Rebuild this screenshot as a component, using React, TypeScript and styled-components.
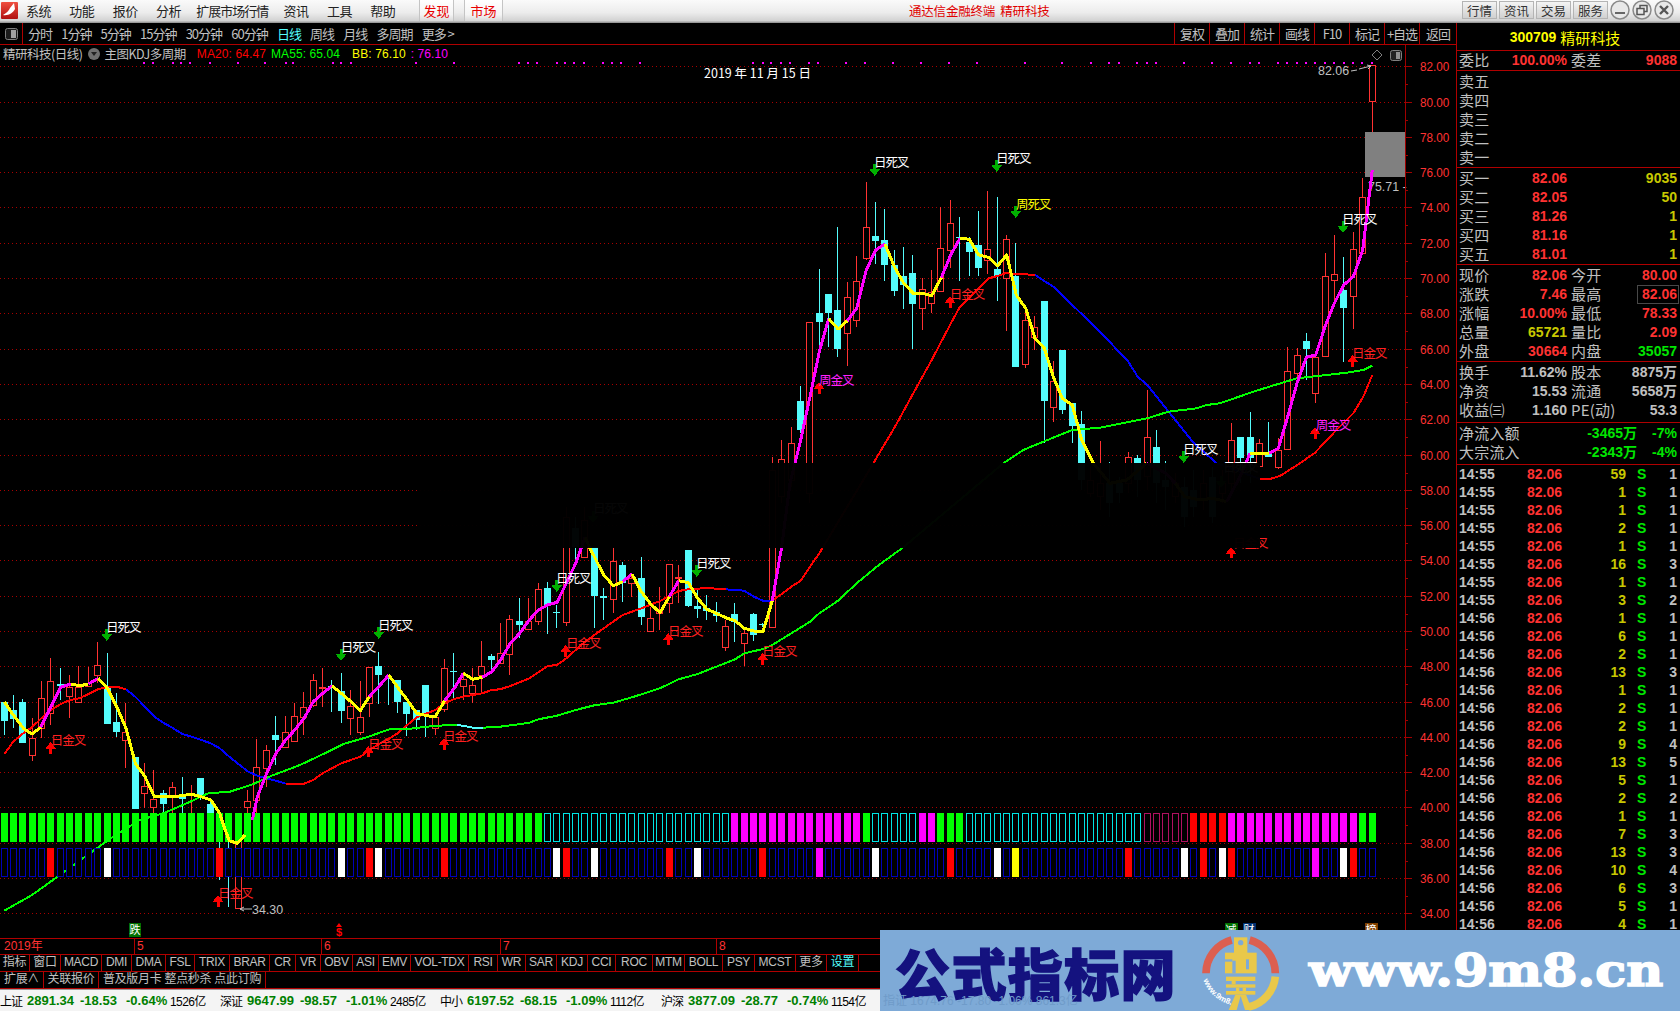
import React from "react";
import styled, { createGlobalStyle } from "styled-components";

const UI = `"Noto Sans CJK SC", "Liberation Sans", sans-serif`;
const NUM = `"Liberation Sans", "Noto Sans CJK SC", sans-serif`;
const LINE = "#b00000";
const RED = "#ff3232";
const GRAY = "#c0c0c0";

const Global = createGlobalStyle`
  html, body { margin: 0; padding: 0; background: #000; width: 1680px; height: 1011px; overflow: hidden; }
  * { box-sizing: border-box; }
`;

const Page = styled.div`
  position: relative; width: 1680px; height: 1011px; display: flex; flex-direction: column;
  background: #000; font-family: ${UI}; color: ${GRAY}; overflow: hidden;
`;

/* ---------- menu bar ---------- */
const MenuBar = styled.div`
  height: 23px; flex: none; display: flex; align-items: stretch; color: #222; font-size: 13px;
  background: linear-gradient(#fafafa, #ececec 55%, #d2d2d2 90%, #8a8a8a);
`;
const LogoBox = styled.svg`width: 18px; height: 20px; margin: 1px 7px 0 1px; flex: none;`;
const MenuItems = styled.div`display: flex; align-items: center; gap: 18.3px; width: 393px; padding-bottom: 2px; letter-spacing: -0.5px; white-space: nowrap;`;
const MenuItem = styled.span<{ $tight?: boolean }>`${p => (p.$tight ? "margin: 0 -3px; letter-spacing: -1px;" : "")}`;
const Discover = styled.span<{ $w: number }>`
  width: ${p => p.$w}px; margin-right: 10px; display: flex; align-items: center; justify-content: center;
  color: #e80000; background: linear-gradient(#fff, #f4f4f4 70%, #d8d8d8);
  border-left: 1px solid #c4c4c4; border-right: 1px solid #c4c4c4; margin-bottom: 2px;
`;
const CenterTitle = styled.span`
  position: absolute; left: 909px; top: 2px; font-size: 12.5px; letter-spacing: -0.2px; line-height: 18px; color: #e00000; white-space: pre;
`;
const WinGroup = styled.div`margin-left: auto; display: flex; align-items: center; gap: 2px; padding-right: 6px; padding-bottom: 3px;`;
const WinBtn = styled.span`
  width: 35px; height: 18px; display: flex; align-items: center; justify-content: center; font-size: 12.5px; color: #333;
  border: 1px solid #b4b4b4; background: linear-gradient(#f4f4f4, #d0d0d0);
`;
const RoundBtn = styled.svg`width: 20px; height: 20px; flex: none;`;

/* ---------- body ---------- */
const Body = styled.div`flex: 1; display: flex; min-height: 0;`;
const Main = styled.div`width: 1456px; flex: none; display: flex; flex-direction: column;`;

const Toolbar = styled.div`
  height: 22px; flex: none; display: flex; align-items: stretch; border-bottom: 1px solid ${LINE}; font-size: 13px; letter-spacing: -1px;
`;
const ToolIcon = styled.div`width: 23px; flex: none; display: flex; align-items: center; justify-content: center; border-right: 1px solid ${LINE};`;
const Periods = styled.div`display: flex; align-items: center; gap: 9.2px; padding-left: 5px; white-space: nowrap;`;
const Period = styled.span<{ $on?: boolean }>`color: ${p => (p.$on ? "#54fcfc" : GRAY)};`;
const ToolRight = styled.div`margin-left: auto; display: flex;`;
const ToolBtn = styled.span<{ $w?: number }>`
  width: ${p => p.$w ?? 35}px; display: flex; align-items: center; justify-content: center; border-left: 1px solid ${LINE}; white-space: nowrap;
`;

const ChartWrap = styled.div`position: relative; flex: 1; min-height: 0;`;
const ChartSvg = styled.svg`display: block; width: 1456px; height: 892px;`;
const InfoLine = styled.div`
  position: absolute; left: 3px; top: 0; display: flex; align-items: center; height: 17px; font-size: 12.5px; white-space: nowrap; letter-spacing: -0.5px;
`;
const InfoIcon = styled.span`
  width: 12px; height: 12px; border-radius: 50%; background: #707070; margin: 0 4px 0 6px; display: inline-flex; align-items: center; justify-content: center;
  &::after { content: ""; border: 3px solid transparent; border-top: 4px solid #222; margin-top: 4px; }
`;
const InfoVal = styled.span<{ $c: string; $ml: number }>`
  color: ${p => p.$c}; margin-left: ${p => p.$ml}px; font-family: ${NUM}; font-size: 12px; letter-spacing: 0.1px;
`;

const DateRow = styled.div`
  height: 17px; flex: none; display: flex; border-top: 1px solid ${LINE}; border-bottom: 1px solid ${LINE};
  color: ${RED}; font-size: 12px; font-family: ${NUM}; line-height: 15px;
`;
const DateCell = styled.div<{ $w: number; $first?: boolean }>`
  width: ${p => p.$w}px; padding-left: ${p => (p.$first ? 4 : 2)}px; ${p => (p.$first ? "" : `border-left: 1px solid ${LINE};`)}
`;
const TabRow = styled.div`
  height: 17px; flex: none; display: flex; border-bottom: 1px solid ${LINE}; font-size: 12px; line-height: 15px; font-family: ${NUM}; letter-spacing: -0.3px;
`;
const Tab = styled.span<{ $w: number; $on?: boolean }>`
  width: ${p => p.$w}px; flex: none; text-align: center; border-right: 1px solid ${LINE}; white-space: nowrap; color: ${p => (p.$on ? "#54fcfc" : GRAY)};
`;

/* ---------- side panel ---------- */
const Side = styled.div`flex: 1; min-width: 0; border-left: 1px solid ${LINE}; overflow: hidden;`;
const Title = styled.div`
  height: 28px; display: flex; align-items: center; justify-content: center; gap: 4px; border-bottom: 1px solid ${LINE}; padding: 1px 7px 0 0;
  color: #ffff00; font-size: 15px;
`;
const Code = styled.b`font-family: ${NUM}; font-size: 14px;`;
const Section = styled.div<{ $pad?: number; $h?: number }>`
  padding: ${p => p.$pad ?? 1}px 3px 0 2px; border-bottom: 1px solid ${LINE};
  ${p => (p.$h ? `height: ${p.$h}px;` : "")}
`;
const QuoteRow = styled.div`
  height: 19px; display: grid; grid-template-columns: 36px 72px 36px 1fr; column-gap: 0; align-items: center;
  & > :nth-child(3) { margin-left: 4px; }
`;
const WideRow = styled.div`height: 19px; display: grid; grid-template-columns: 1fr 90px 40px; align-items: center;`;
const Lab = styled.span`font-size: 15px; line-height: 19px; margin-top: -3px; color: ${GRAY}; white-space: nowrap; letter-spacing: 0.2px;`;
const toneOf: Record<string, string> = { r: RED, y: "#c8c800", g: "#00e600", w: GRAY };
const Val = styled.span<{ $t: string; $box?: boolean }>`
  text-align: right; font-family: ${NUM}; font-weight: 700; font-size: 14px; line-height: 17px; margin-top: -1px; white-space: nowrap; color: ${p => toneOf[p.$t]};
  ${p => (p.$box ? "border: 1px solid #484848; margin-right: -2px; padding-right: 1px; margin-left: 34px;" : "")}
`;
const TickRow = styled.div`
  height: 18px; padding: 0 3px 0 2px; display: grid; grid-template-columns: 68px 36px 63px 21px 1fr; align-items: center;
  font-family: ${NUM}; font-weight: 700; font-size: 14px; line-height: 18px;
`;
const TickCell = styled.span<{ $t: string; $r?: boolean; $pl?: number }>`
  color: ${p => toneOf[p.$t]}; text-align: ${p => (p.$r ? "right" : "left")}; padding-left: ${p => p.$pl ?? 0}px;
`;

/* ---------- status bar ---------- */
const Status = styled.div`
  height: 22px; flex: none; display: flex; background: #f4f4f4; border-top: 1px solid #9a9a9a; color: #000; font-size: 13px; align-items: center; padding-bottom: 1px;
`;
const StatGroup = styled.div<{ $w: number }>`
  width: ${p => p.$w}px; flex: none; display: grid; grid-template-columns: 27px 53px 46px 44px 1fr; align-items: center; white-space: nowrap;
`;
const StatName = styled.span`font-size: 12px; letter-spacing: -1px;`;
const StatNum = styled.b`font-family: ${NUM}; font-size: 13px; color: #008000;`;
const StatVol = styled.span`font-family: ${NUM}; font-size: 12px; letter-spacing: -0.6px;`;

/* ---------- watermark overlay ---------- */
const Watermark = styled.div`
  position: absolute; left: 880px; top: 930px; width: 800px; height: 81px; background: #7eaad7; display: flex; align-items: center; overflow: hidden;
`;
const MarkName = styled.div`
  width: 310px; flex: none; padding-left: 15px; font-size: 55px; line-height: 76px; font-weight: 900; color: #14127f; white-space: nowrap; letter-spacing: 1.4px;
  -webkit-text-stroke: 1.4px #14127f;
`;
const MarkLogo = styled.svg`width: 110px; height: 86px; flex: none; margin-top: 5px;`;
const MarkUrl = styled.div`
  margin-left: 9px; font-family: "DejaVu Serif", "Liberation Serif", serif; font-weight: 700; font-size: 45px; line-height: 60px; color: #fff;
  white-space: nowrap; transform: scaleX(1.13); transform-origin: left center; -webkit-text-stroke: 1.6px #fff; letter-spacing: 0;
`;
const Ghost = styled.span`
  position: absolute; left: 3px; bottom: 3px; font-size: 12px; color: #6f9bc9; white-space: nowrap; font-family: ${NUM};
`;

/* ---------- data ---------- */
type CandleRow = [number, "r" | "c", number, number, number, number];
const batch = (off: number, rows: CandleRow[]) =>
  rows.map(([i, k, bt, bb, wt, wb]) => ({ i, k, bt: off + bt / 3, bb: off + bb / 3, wt: off + wt / 3, wb: off + wb / 3 }));

const candles = [
  ...batch(600, [
    [0,"c",305,362,305,405],[1,"c",330,357,285,385],[2,"c",306,430,296,430],[3,"r",415,466,355,482],[4,"r",295,385,242,415],
    [5,"r",244,340,175,375],[6,"c",252,256,205,300],[7,"r",260,287,225,355],[8,"r",260,305,198,305],[9,"r",250,258,200,262],
    [10,"r",196,227,126,250],[11,"c",265,371,160,371],[12,"c",366,396,280,410],[13,"r",395,418,310,505],[14,"c",472,627,472,627],
    [15,"r",557,578,490,625],[16,"r",596,620,510,640],[17,"c",580,612,570,640],[18,"r",562,585,547,640],[19,"c",590,597,532,640],
    [20,"r",580,585,555,640],[21,"c",534,590,534,600],[22,"c",613,640,600,640],[23,"c",640,700,640,840],[24,"c",700,710,700,920],
    [25,"r",700,925,700,925],[26,"r",602,620,570,640],[27,"r",502,600,418,640],[28,"r",451,505,435,560],[29,"c",405,420,348,495],
    [30,"r",395,440,348,445],[31,"r",347,421,308,421],[32,"r",322,352,275,405],[33,"r",241,316,222,320],[34,"r",262,265,205,320],
    [35,"c",258,262,240,335],[36,"c",274,332,218,370],[37,"r",317,352,270,405],[38,"r",352,398,243,405],[39,"r",202,310,202,350],
    [40,"c",198,224,155,312],[41,"c",228,232,225,315],[42,"c",240,305,240,340],[43,"c",306,342,306,408],[44,"c",330,360,330,390],
    [45,"c",255,340,255,410],[46,"r",352,385,340,405],[47,"r",205,328,178,335],[48,"c",212,216,160,300],[49,"r",238,260,215,300],
    [50,"r",256,280,205,310],[51,"r",198,225,124,280],[52,"c",168,180,162,220],
  ]),
  ...batch(450, [
    [53,"r",610,640,520,640],[54,"r",508,612,495,675],[55,"c",513,525,445,565],[56,"r",514,538,445,538],[57,"r",418,515,400,525],
    [58,"c",414,466,395,552],[59,"c",485,489,465,535],[60,"r",200,515,170,528],[61,"c",235,290,200,345],[62,"r",210,320,170,320],
    [63,"c",292,438,292,535],[64,"c",438,442,415,510],[65,"r",333,446,292,490],[66,"c",346,398,335,455],[67,"r",385,400,370,440],
    [68,"c",384,500,322,525],[69,"r",505,545,470,545],[70,"r",480,490,410,540],[71,"r",343,460,342,488],[72,"r",381,385,345,460],
    [73,"c",300,467,300,470],[74,"c",468,477,420,505],[75,"c",475,482,435,510],[76,"c",485,497,457,515],[77,"r",527,590,510,602],
    [78,"c",492,515,460,575],[79,"r",550,580,540,648],[80,"c",492,555,490,572],[81,"c",521,525,520,530],[82,"r",60,530,20,530],
  ]),
  ...batch(130, [
    [83,"r",988,1100,930,1120],[84,"r",938,1050,892,1070],[85,"c",813,900,768,910],[86,"r",577,1090,577,1120],[87,"c",549,576,418,660],
    [88,"c",492,549,492,650],[89,"c",540,657,292,680],[90,"r",502,610,457,708],[91,"r",454,572,378,590],[92,"r",292,384,155,390],
    [93,"c",318,333,216,402],[94,"c",330,405,237,452],[95,"c",405,484,360,497],[96,"c",438,465,350,537],[97,"c",429,522,375,657],
    [98,"r",478,536,445,600],[99,"r",485,518,420,548],[100,"r",355,485,232,485],[101,"r",280,362,210,415],[102,"c",320,324,262,452],
    [103,"c",335,366,320,438],[104,"c",345,414,243,438],[105,"r",358,392,183,432],[106,"c",417,437,202,512],[107,"r",328,445,316,603],
    [108,"c",438,711,340,711],[109,"r",570,703,530,715],[110,"r",590,620,558,660],[111,"c",513,813,513,940],[112,"r",753,832,692,875],
    [113,"c",660,840,660,852],[114,"c",820,888,820,940],
  ]),
  ...batch(50, [
    [115,"c",1122,1290,1083,1320],[116,"r",1290,1330,1250,1340],[117,"r",1300,1340,1173,1380],[118,"c",1300,1360,1235,1400],[119,"c",1300,1330,1280,1360],
    [120,"r",1222,1300,1205,1330],[121,"c",1225,1290,1215,1340],[122,"r",1162,1280,1020,1320],[123,"c",1192,1300,1140,1360],[124,"c",1290,1310,1232,1380],
    [125,"r",1300,1340,1270,1360],[126,"c",1310,1400,1280,1430],[127,"c",1320,1370,1260,1400],[128,"r",1300,1350,1260,1380],[129,"c",1280,1400,1250,1420],
    [130,"r",1300,1330,1260,1360],[131,"r",1170,1300,1120,1320],[132,"c",1162,1225,1162,1300],[133,"c",1162,1225,1087,1300],[134,"r",1180,1250,1168,1250],
    [135,"c",1205,1222,1115,1222],[136,"r",1200,1252,1165,1258],[137,"r",962,1195,890,1195],[138,"r",914,968,895,1000],[139,"c",874,898,850,990],
    [140,"r",922,1030,922,1058],[141,"r",677,918,610,918],[142,"r",671,688,555,770],[143,"c",720,773,622,937],[144,"r",598,740,547,838],
    [145,"r",442,610,385,610],[146,"r",46,154,46,245],
  ]),
];

const conv = (ox: number, oy: number, pts: number[][]) => pts.map(([x, y]) => `${(ox + x / 3).toFixed(1)},${(oy + y / 3).toFixed(1)}`);
const Z6 = (p: number[][]) => conv(0, 600, p);
const Z7 = (p: number[][]) => conv(500, 450, p);
const Z8 = (p: number[][]) => conv(760, 130, p);
const Z9 = (p: number[][]) => conv(1000, 50, p);

const Y = "#ffff00", M = "#ff00ff", R = "#ff0000", B = "#0000ff", G = "#00ff00", Cy = "#54fcfc";

const kdj: [string, string[]][] = [
  [Y, Z6([[13,305],[40,345],[70,385],[96,402],[122,382]])],
  [M, Z6([[122,382],[150,325],[182,262],[212,252]])],
  [Y, Z6([[212,252],[240,257],[265,252]])],
  [M, Z6([[265,252],[295,235]])],
  [Y, Z6([[295,235],[322,265],[350,320],[378,385],[406,490],[435,530],[463,590],[490,590],[520,590],[575,583],[604,590],[632,600],[659,640],[672,680],[688,722],[712,730],[735,705]])],
  [M, Z6([[757,660],[772,590],[800,520],[828,460],[857,420],[884,390],[912,355],[940,305],[968,280],[996,258]])],
  [Y, Z6([[996,258],[1024,280],[1053,305],[1081,332],[1108,290]])],
  [M, Z6([[1108,290],[1138,258],[1166,225]])],
  [Y, Z6([[1166,225],[1193,262],[1222,300],[1250,340],[1280,347],[1306,350],[1334,302]])],
  [M, Z6([[1334,302],[1363,265],[1390,220]])],
  [Y, Z6([[1390,220],[1418,238],[1447,232]])],
  [M, [...Z6([[1447,232],[1475,215],[1500,183]]), ...Z7([[31,580],[59,550],[88,510],[115,480],[143,465],[171,457],[199,400],[227,340],[245,290],[255,262]])]],
  [Y, Z7([[255,262],[270,295],[311,375],[340,407],[368,395]])],
  [M, Z7([[368,395],[396,372]])],
  [Y, Z7([[396,372],[424,425],[452,462],[480,488],[508,440]])],
  [M, Z7([[508,440],[536,392]])],
  [Y, Z7([[536,392],[565,398],[593,445],[621,478],[649,490],[677,503],[705,512],[733,535],[761,543],[789,545],[817,452]])],
  [M, [...Z7([[817,452],[845,290],[870,100]]), ...Z8([[105,1000],[122,930],[150,800],[178,665],[206,566]])]],
  [Y, Z8([[206,566],[234,597],[262,572]])],
  [M, Z8([[262,572],[290,535],[319,420],[347,360],[375,342]])],
  [Y, Z8([[375,342],[403,410],[431,460],[460,490],[487,490],[515,497],[544,443]])],
  [M, Z8([[544,443],[572,375],[600,325]])],
  [Y, [...Z8([[600,325],[628,328],[656,375],[685,382],[713,407],[740,375],[769,495],[797,535],[825,625],[853,655],[880,740],[907,805],[937,825],[965,930],[1000,1000]]), ...Z9([[330,1300],[380,1290],[440,1240]])]],
  [M, Z9([[440,1240],[497,1270],[526,1300]])],
  [Y, Z9([[526,1300],[554,1340],[600,1350],[638,1345],[680,1355]])],
  [M, Z9([[680,1355],[720,1280],[750,1210]])],
  [Y, Z9([[750,1210],[807,1210]])],
  [M, Z9([[807,1210],[835,1195],[863,1100],[891,1000],[919,922],[947,915],[975,830],[1003,760],[1031,705],[1060,680],[1088,600],[1117,360]])],
];

const ma20: [string, string[]][] = [
  [R, Z6([[13,462],[40,425],[70,400],[96,382],[124,355],[154,330],[182,312],[210,300],[238,295],[266,282],[295,267],[322,262],[350,260],[378,268]])],
  [B, Z6([[378,268],[406,290],[435,320],[463,350],[490,368],[520,385],[547,402],[575,410],[604,420],[632,430],[659,445],[688,470],[716,493],[745,515],[772,527],[800,535],[828,542],[857,551]])],
  [R, [...Z6([[857,551],[912,551],[940,540],[968,520],[1024,490],[1081,470],[1108,450],[1138,432],[1166,417],[1193,400],[1222,375],[1250,352],[1306,330],[1334,310],[1363,297],[1390,290],[1418,285],[1447,280],[1475,270],[1500,268]]),
       ...Z7([[31,708],[88,685],[143,648],[171,645],[199,625],[255,575],[311,535],[368,495],[424,475],[480,453],[536,423],[565,418],[621,414],[677,418]])]],
  [B, Z7([[677,418],[733,422],[761,440],[789,452],[817,452]])],
  [R, [...Z7([[817,452],[845,432],[874,410],[902,392],[930,350],[958,310],[970,290]]), ...Z8([[340,1000],[405,890],[460,790],[515,690],[570,585],[600,530],[685,445],[713,438],[740,428],[769,433],[797,433],[825,435]])]],
  [B, [...Z8([[825,435],[880,470],[937,525],[1020,605],[1105,695],[1133,740],[1162,765],[1218,835],[1302,940],[1370,1000]]), ...Z9([[780,1287]])]],
  [R, Z9([[780,1287],[810,1287],[840,1278],[900,1240],[945,1208],[1000,1150],[1060,1090],[1090,1040],[1117,975]])],
];

const ma55: [string, string[]][] = [
  [G, [...Z6([[13,932],[96,885],[170,832],[290,745],[340,710],[420,660],[490,640],[560,610],[625,580],[690,575],[760,552],[815,527],[900,495],[970,462],[1030,432],[1100,412],[1168,388],[1222,387],[1300,378],[1370,374]])]],
  [Cy, Z6([[1370,374],[1420,383],[1450,383]])],
  [G, [...Z6([[1450,383],[1500,380]]), ...Z7([[40,825],[88,818],[115,808],[171,797],[227,780],[283,766],[340,758],[396,742],[480,715],[536,688],[593,672],[649,650],[705,628],[733,610],[789,597],[817,585],[874,550],[930,515],[958,490],[1014,452],[1070,400],[1130,350],[1210,292]]),
       ...Z8([[730,1000],[790,960],[850,935],[937,900],[1020,893],[1162,865],[1225,845]]),
       ...Z9([[590,1075],[620,1065],[660,1060],[760,1025],[890,985],[1040,968],[1090,960],[1117,947]])]],
];

const barX = (i: number) => Math.floor(1 + 9.37 * i);
const topBar = (i: number): [string, boolean] => {
  if (i <= 57) return [G, true];
  if (i <= 77) return ["#00e4e4", false];
  if (i <= 91) return [M, true];
  if (i === 92) return [G, true];
  if (i <= 97) return ["#00e4e4", false];
  if (i <= 99) return [M, true];
  if (i <= 102) return [G, true];
  if (i <= 121) return ["#00e4e4", false];
  if (i <= 126) return ["#b01060", false];
  if (i <= 130) return [R, true];
  if (i <= 144) return [M, true];
  return [G, true];
};
const botMap: Record<number, string> = {
  5: R, 11: "#fff", 23: R, 36: "#fff", 39: R, 40: "#fff", 47: R, 59: "#fff", 60: R, 63: "#fff", 71: R, 74: "#fff", 81: R, 87: M, 93: "#fff",
  101: R, 106: "#fff", 108: Y, 120: R, 126: "#fff", 128: R, 130: "#fff", 131: R, 140: M, 143: "#fff", 144: R,
};

type Lbl = { x: number; y: number; t: string; c: string; ax: number; a1: number; a2: number; dir: "u" | "d"; ac: string };
const dn = (x: number, y: number, t: string, ax: number, a1: number, a2: number, c = "#fff"): Lbl => ({ x, y, t, c, ax, a1, a2, dir: "d", ac: "#00b000" });
const up = (x: number, y: number, t: string, ax: number, a1: number, a2: number, c = "#ff2020"): Lbl => ({ x, y, t, c, ax, a1, a2, dir: "u", ac: "#ff0000" });
const labels: Lbl[] = [
  up(50.7, 740.7, "日金叉", 50.7, 742, 754),
  dn(106, 627.7, "日死叉", 106.7, 629, 641),
  up(218, 893, "日金叉", 218, 895, 907),
  dn(340.7, 647.7, "日死叉", 341, 649, 661),
  dn(378, 625.7, "日死叉", 378.7, 627, 639),
  up(368, 744, "日金叉", 368.3, 746, 757),
  up(443, 736, "日金叉", 444, 738, 750),
  dn(556, 578, "日死叉", 556.7, 580, 592),
  dn(593, 508.7, "日死叉", 593, 511, 523),
  dn(696, 563, "日死叉", 696.7, 565, 577),
  up(566, 643, "日金叉", 565.7, 645, 657),
  up(668, 631.7, "日金叉", 668.3, 633, 645),
  up(762, 651.7, "日金叉", 762.7, 653, 665),
  dn(874, 162, "日死叉", 874.7, 164, 176),
  dn(996, 158, "日死叉", 996.7, 160, 172),
  dn(1016, 204, "周死叉", 1015.7, 206, 218, "#ffff00"),
  up(949.7, 294, "日金叉", 950, 296, 308),
  up(819, 380, "周金叉", 819, 382, 394, "#ff20ff"),
  dn(1183, 449, "日死叉", 1183.7, 451, 463),
  dn(1342, 219, "日死叉", 1343, 221, 233),
  up(1352, 353, "日金叉", 1352.7, 355, 367),
  up(1315.7, 425, "周金叉", 1315, 427, 439, "#ff20ff"),
  dn(1223, 467, "日死叉", 1221, 476, 488),
  up(1233, 543, "日金叉", 1231, 547, 558),
];

const dots = [144,153,173,181,190,210,238,265,286,293,333,341,351,416,454,519,528,537,557,565,574,584,603,612,621,640,753,763,771,781,790,809,818,846,865,893,921,949,977,1025,1062,1091,1109,1119,1137,1147,1156,1184,1212,1231,1250,1259,1278,1287,1297,1306,1315,1325,1334,1344,1353,1362,1372];

const priceY = (p: number) => Math.round(66.3 + (82 - p) * 17.646);

const SvgNum = styled.text`font-family: ${NUM}; font-size: 13.5px;`;
const SvgCjk = styled.text`font-family: ${UI}; font-size: 12.5px; letter-spacing: -1px;`;
const SvgDate = styled.text`font-family: ${UI}; font-size: 12.5px;`;
const SvgBadge = styled.text`font-family: ${UI}; font-size: 11px; fill: #fff;`;
const SvgDollar = styled.text`font-family: ${NUM}; font-size: 11px; font-weight: 700; fill: #ff0000;`;

const Chart: React.FC = () => {
  const prices: number[] = [];
  for (let p = 82; p >= 34; p -= 2) prices.push(p);
  return (
    <ChartSvg viewBox="0 45 1456 892">
      <rect x={0} y={45} width={1456} height={892} fill="#000" />
      {prices.map(p => (
        <line key={p} x1={0} x2={1405} y1={priceY(p) + 0.5} y2={priceY(p) + 0.5} stroke="#a80000" strokeDasharray="1 3" shapeRendering="crispEdges" />
      ))}
      {dots.map(x => <rect key={x} x={x - 1} y={62} width={2} height={2} fill="#ff00ff" />)}

      {candles.map(c => {
        const cx = Math.floor(barX(c.i) + 3) + 0.5;
        const col = c.k === "r" ? RED : Cy;
        return (
          <g key={c.i} shapeRendering="crispEdges">
            <line x1={cx} x2={cx} y1={c.wt} y2={c.wb} stroke={col} />
            {c.k === "r"
              ? <rect x={cx - 3} y={Math.round(c.bt) + 0.5} width={6} height={Math.max(1, Math.round(c.bb - c.bt))} fill="#000" stroke={col} />
              : <rect x={cx - 3.5} y={c.bt} width={7} height={Math.max(1.5, c.bb - c.bt)} fill={col} />}
          </g>
        );
      })}

      <rect x={1365} y={132} width={40} height={45} fill="#808080" />
      <SvgNum x={1368} y={191} fill={GRAY} transform="translate(1368 191) scale(.92 1) translate(-1368 -191)">75.71 -</SvgNum>

      {[...ma20, ...ma55].map(([c, pts], i) => (
        <polyline key={i} points={pts.join(" ")} fill="none" stroke={c} strokeWidth={2} shapeRendering="crispEdges" />
      ))}

      {Array.from({ length: 147 }, (_, i) => {
        const x = barX(i);
        const [c, solid] = topBar(i);
        const b = botMap[i];
        return (
          <g key={i} shapeRendering="crispEdges">
            {solid
              ? <rect x={x} y={813} width={7} height={29} fill={c} />
              : <rect x={x + 0.5} y={813.5} width={6} height={28} fill="#000" stroke={c} />}
            {b
              ? <rect x={x} y={848} width={7} height={29} fill={b} />
              : <rect x={x + 0.5} y={848.5} width={6} height={28} fill="#000" stroke="#0000b8" />}
          </g>
        );
      })}

      {kdj.map(([c, pts], i) => (
        <polyline key={i} points={pts.join(" ")} fill="none" stroke={c} strokeWidth={3} strokeLinejoin="round" shapeRendering="crispEdges" />
      ))}

      {labels.map((l, i) => (
        <g key={i}>
          {l.dir === "u" ? (
            <path d={`M${l.ax},${l.a1} l5.5,7 h-4 V${l.a2} h-3 V${l.a1 + 7} h-4 z`} fill={l.ac} shapeRendering="crispEdges" />
          ) : (
            <path d={`M${l.ax},${l.a2} l5.5,-7 h-4 V${l.a1} h-3 V${l.a2 - 7} h-4 z`} fill={l.ac} shapeRendering="crispEdges" />
          )}
          <SvgCjk x={l.x} y={l.y + 4.5} fill={l.c}>{l.t}</SvgCjk>
        </g>
      ))}

      <SvgDate x={704} y={78} fill="#fff">2019 年 11 月 15 日</SvgDate>

      <path d="M240,909 h12 M240,909 l4,-2 M240,909 l4,2" stroke={GRAY} fill="none" />
      <SvgNum x={252} y={914} fill={GRAY} transform="translate(252 914) scale(.92 1) translate(-252 -914)">34.30</SvgNum>
      <SvgNum x={1318} y={75} fill={GRAY} transform="translate(1318 75) scale(.92 1) translate(-1318 -75)">82.06</SvgNum>
      <path d="M1351,71 l6,-1 M1359,69 l12,-3 M1371,66 l-4,-1 M1371,66 l-3,3" stroke={GRAY} fill="none" />

      {/* band that is blanked out in the reference */}
      <rect x={420} y={463} width={840} height={85} fill="#000" opacity={0.975} />

      {/* little event badges */}
      <rect x={129} y={923} width={12} height={14} fill="#007000" />
      <SvgBadge x={129.5} y={934}>跌</SvgBadge>
      <path d="M339,923 l3,4 h-6 z" fill={R} />
      <SvgDollar x={336} y={936}>$</SvgDollar>
      <rect x={1225} y={923} width={13} height={14} fill="#007000" />
      <SvgBadge x={1225.5} y={934}>减</SvgBadge>
      <rect x={1243} y={923} width={13} height={14} fill="#003070" />
      <SvgBadge x={1243.5} y={934}>财</SvgBadge>
      <rect x={1365} y={923} width={13} height={14} fill="#804000" />
      <SvgBadge x={1365.5} y={934}>榜</SvgBadge>

      {/* price axis */}
      <line x1={1405.5} x2={1405.5} y1={45} y2={937} stroke="#a00000" shapeRendering="crispEdges" />
      {prices.map(p => {
        const y = priceY(p);
        return (
          <g key={p}>
            <line x1={1405} x2={1412} y1={y + 0.5} y2={y + 0.5} stroke="#a00000" shapeRendering="crispEdges" />
            <line x1={1405} x2={1408} y1={y + 18} y2={y + 18} stroke="#a00000" shapeRendering="crispEdges" />
            <SvgNum x={1420} y={y + 5.5} fill={RED} transform={`translate(1420 ${y + 5}) scale(.87 1) translate(-1420 ${-y - 5})`}>{p.toFixed(2)}</SvgNum>
          </g>
        );
      })}
      <path d="M1377,50 l5,5 l-5,5 l-5,-5 z" fill="none" stroke="#808080" />
      <rect x={1390.5} y={50.5} width={11} height={10} rx={2} fill="#222" stroke="#808080" />
      <rect x={1396} y={52} width={4} height={7} fill="#909090" />
    </ChartSvg>
  );
};

const quotesTop = [["卖五"], ["卖四"], ["卖三"], ["卖二"], ["卖一"]];
const buys = [["买一", "82.06", "9035"], ["买二", "82.05", "50"], ["买三", "81.26", "1"], ["买四", "81.16", "1"], ["买五", "81.01", "1"]];
const stats: [string, string, string, string, string, string, string?][] = [
  ["现价", "82.06", "r", "今开", "80.00", "r"],
  ["涨跌", "7.46", "r", "最高", "82.06", "r", "box"],
  ["涨幅", "10.00%", "r", "最低", "78.33", "r"],
  ["总量", "65721", "y", "量比", "2.09", "r"],
  ["外盘", "30664", "r", "内盘", "35057", "g"],
];
const funds: [string, string, string, string][] = [
  ["换手", "11.62%", "股本", "8875万"],
  ["净资", "15.53", "流通", "5658万"],
  ["收益㈢", "1.160", "PE(动)", "53.3"],
];
const t55 = [[59,1],[1,1],[1,1],[2,1],[1,1],[16,3],[1,1],[3,2]];
const t56 = [[1,1],[6,1],[2,1],[13,3],[1,1],[2,1],[2,1],[9,4],[13,5],[5,1],[2,2],[1,1],[7,3],[13,3],[10,4],[6,3],[5,1],[4,1]];
const ticks = [...t55.map(r => ["14:55", ...r]), ...t56.map(r => ["14:56", ...r])] as [string, number, number][];

const periods = ["分时", "1分钟", "5分钟", "15分钟", "30分钟", "60分钟", "日线", "周线", "月线", "多周期", "更多 >"];
const menus = ["系统", "功能", "报价", "分析", "扩展市场行情", "资讯", "工具", "帮助"];
const tabs: [string, number][] = [["指标",30],["窗口",31],["MACD",41],["DMI",30],["DMA",34],["FSL",29],["TRIX",35],["BRAR",40],["CR",26],["VR",25],["OBV",32],["ASI",26],["EMV",32],["VOL-TDX",58],["RSI",29],["WR",28],["SAR",31],["KDJ",31],["CCI",28],["ROC",37],["MTM",32],["BOLL",38],["PSY",32],["MCST",41],["更多",31],["设置",32]];
const statusData: [string, string, string, string, string, number][] = [
  ["上证", "2891.34", "-18.53", "-0.64%", "1526亿", 220],
  ["深证", "9647.99", "-98.57", "-1.01%", "2485亿", 220],
  ["中小", "6197.52", "-68.15", "-1.09%", "1112亿", 221],
  ["沪深", "3877.09", "-28.77", "-0.74%", "1154亿", 219],
];

const App: React.FC = () => (
  <Page>
    <Global />
    <MenuBar>
      <LogoBox viewBox="0 0 18 20">
        <defs>
          <linearGradient id="lg" x1="0" y1="0" x2="0" y2="1"><stop offset="0" stopColor="#f05040" /><stop offset="1" stopColor="#b01010" /></linearGradient>
        </defs>
        <rect x="0" y="1" width="17" height="17" rx="1" fill="url(#lg)" />
        <path d="M2,14 C5,12 8,10 9,7 L13,2 L14,8 C12,12 7,15 2,14 Z" fill="#fff" />
      </LogoBox>
      <MenuItems>
        {menus.map(m => <MenuItem key={m} $tight={m.length > 2}>{m}</MenuItem>)}
      </MenuItems>
      <Discover $w={35}>发现</Discover>
      <Discover $w={39}>市场</Discover>
      <CenterTitle>通达信金融终端  精研科技</CenterTitle>
      <WinGroup>
        {["行情", "资讯", "交易", "服务"].map(b => <WinBtn key={b}>{b}</WinBtn>)}
        <RoundBtn viewBox="0 0 20 20"><circle cx="10" cy="10" r="9" fill="#e8e8e8" stroke="#8a8a8a" strokeWidth="1.5" /><rect x="5" y="12" width="10" height="2" fill="#666" /></RoundBtn>
        <RoundBtn viewBox="0 0 20 20"><circle cx="10" cy="10" r="9" fill="#e8e8e8" stroke="#8a8a8a" strokeWidth="1.5" /><rect x="8" y="5.5" width="7" height="6" fill="none" stroke="#555" strokeWidth="1.5" /><rect x="5" y="8.5" width="7" height="6" fill="#e8e8e8" stroke="#555" strokeWidth="1.5" /></RoundBtn>
        <RoundBtn viewBox="0 0 20 20"><circle cx="10" cy="10" r="9" fill="#e8e8e8" stroke="#8a8a8a" strokeWidth="1.5" /><path d="M6,6 L14,14 M14,6 L6,14" stroke="#555" strokeWidth="2.4" /></RoundBtn>
      </WinGroup>
    </MenuBar>

    <Body>
      <Main>
        <Toolbar>
          <ToolIcon>
            <svg width="13" height="12" viewBox="0 0 13 12"><rect x="0.5" y="0.5" width="12" height="11" rx="2" fill="#1c1c1c" stroke="#808080" /><rect x="6" y="2" width="5" height="8" fill="#a0a0a0" /></svg>
          </ToolIcon>
          <Periods>
            {periods.map(p => <Period key={p} $on={p === "日线"}>{p}</Period>)}
          </Periods>
          <ToolRight>
            {["复权", "叠加", "统计", "画线", "F10", "标记", "+自选"].map(t => <ToolBtn key={t}>{t}</ToolBtn>)}
            <ToolBtn $w={37}>返回</ToolBtn>
          </ToolRight>
        </Toolbar>
        <ChartWrap>
          <Chart />
          <InfoLine>
            精研科技(日线)<InfoIcon />主图KDJ多周期
            <InfoVal $c="#ff0000" $ml={11}>MA20: 64.47</InfoVal>
            <InfoVal $c="#00ff00" $ml={5}>MA55: 65.04</InfoVal>
            <InfoVal $c="#ffff00" $ml={12}>BB: 76.10</InfoVal>
            <InfoVal $c="#ff00ff" $ml={5}>: 76.10</InfoVal>
          </InfoLine>
        </ChartWrap>
        <DateRow>
          <DateCell $w={134} $first>2019年</DateCell>
          <DateCell $w={187}>5</DateCell>
          <DateCell $w={179}>6</DateCell>
          <DateCell $w={216}>7</DateCell>
          <DateCell $w={300}>8</DateCell>
        </DateRow>
        <TabRow>
          {tabs.map(([t, w]) => <Tab key={t} $w={w} $on={t === "设置"}>{t}</Tab>)}
        </TabRow>
        <TabRow>
          <Tab $w={44}>扩展∧</Tab>
          <Tab $w={55}>关联报价</Tab>
          <Tab $w={167}>普及版月卡 整点秒杀 点此订购</Tab>
        </TabRow>
      </Main>

      <Side>
        <Title><Code>300709</Code> 精研科技</Title>
        <Section $pad={0}>
          <QuoteRow><Lab>委比</Lab><Val $t="r">100.00%</Val><Lab>委差</Lab><Val $t="r">9088</Val></QuoteRow>
        </Section>
        <Section>
          {quotesTop.map(([l]) => <QuoteRow key={l}><Lab>{l}</Lab></QuoteRow>)}
        </Section>
        <Section>
          {buys.map(([l, p, v]) => (
            <QuoteRow key={l}><Lab>{l}</Lab><Val $t="r">{p}</Val><span /><Val $t="y">{v}</Val></QuoteRow>
          ))}
        </Section>
        <Section>
          {stats.map(([a, v1, t1, b, v2, t2, box]) => (
            <QuoteRow key={a}><Lab>{a}</Lab><Val $t={t1}>{v1}</Val><Lab>{b}</Lab><Val $t={t2} $box={!!box}>{v2}</Val></QuoteRow>
          ))}
        </Section>
        <Section $pad={1} $h={61}>
          {funds.map(([a, v1, b, v2]) => (
            <QuoteRow key={a}><Lab>{a}</Lab><Val $t="w">{v1}</Val><Lab>{b}</Lab><Val $t="w">{v2}</Val></QuoteRow>
          ))}
        </Section>
        <Section $pad={1} $h={42}>
          <WideRow><Lab>净流入额</Lab><Val $t="g">-3465万</Val><Val $t="g">-7%</Val></WideRow>
          <WideRow><Lab>大宗流入</Lab><Val $t="g">-2343万</Val><Val $t="g">-4%</Val></WideRow>
        </Section>
        {ticks.map(([time, v, n], i) => (
          <TickRow key={i}>
            <TickCell $t="w">{time}</TickCell>
            <TickCell $t="r">82.06</TickCell>
            <TickCell $t="y" $r>{v}</TickCell>
            <TickCell $t="g" $pl={11}>S</TickCell>
            <TickCell $t="w" $r>{n}</TickCell>
          </TickRow>
        ))}
      </Side>
    </Body>

    <Status>
      {statusData.map(([n, a, b, c, d, w]) => (
        <StatGroup key={n} $w={w}>
          <StatName>{n}</StatName><StatNum>{a}</StatNum><StatNum>{b}</StatNum><StatNum>{c}</StatNum><StatVol>{d}</StatVol>
        </StatGroup>
      ))}
    </Status>

    <Watermark>
      <MarkName>公式指标网</MarkName>
      <MarkLogo viewBox="0 0 330 258">
        <g fill="none" strokeWidth="23">
          <path d="M48,130 A104,104 0 0 1 125,30" stroke="#dc5f50" />
          <path d="M179,30 A104,104 0 0 1 256,130" stroke="#dc5f50" />
          <path d="M256,140 A104,104 0 0 1 176,231" stroke="#e9c84a" />
        </g>
        <path id="wmArc" d="M40,150 A118,118 0 0 0 122,224" fill="none" />
        <text fontFamily={NUM} fontSize="24" fontWeight="700" fill="#fff"><textPath href="#wmArc">www.9m8.cn</textPath></text>
        <g fill="#e9c84a">
          <rect x="132" y="22" width="40" height="48" />
          <rect x="105" y="68" width="95" height="62" />
          <rect x="108" y="140" width="88" height="13" />
          <rect x="125" y="153" width="12" height="10" />
          <rect x="108" y="163" width="88" height="10" />
          <rect x="108" y="183" width="88" height="11" />
          <path d="M136,194 L116,240 H186 L168,194 Z" />
          <rect x="138" y="173" width="10" height="12" />
          <rect x="158" y="173" width="10" height="12" />
        </g>
        <g fill="#7eaad7">
          <circle cx="152" cy="38" r="8" />
          <rect x="127" y="92" width="10" height="38" />
          <rect x="168" y="88" width="9" height="30" />
          <rect x="105" y="88" width="22" height="7" />
          <path d="M152,198 L140,240 H165 Z" />
        </g>
      </MarkLogo>
      <MarkUrl>www.9m8.cn</MarkUrl>
      <Ghost>指证 1674.76 -17.80 -1.06% 861.3亿</Ghost>
    </Watermark>
  </Page>
);

export default App;
